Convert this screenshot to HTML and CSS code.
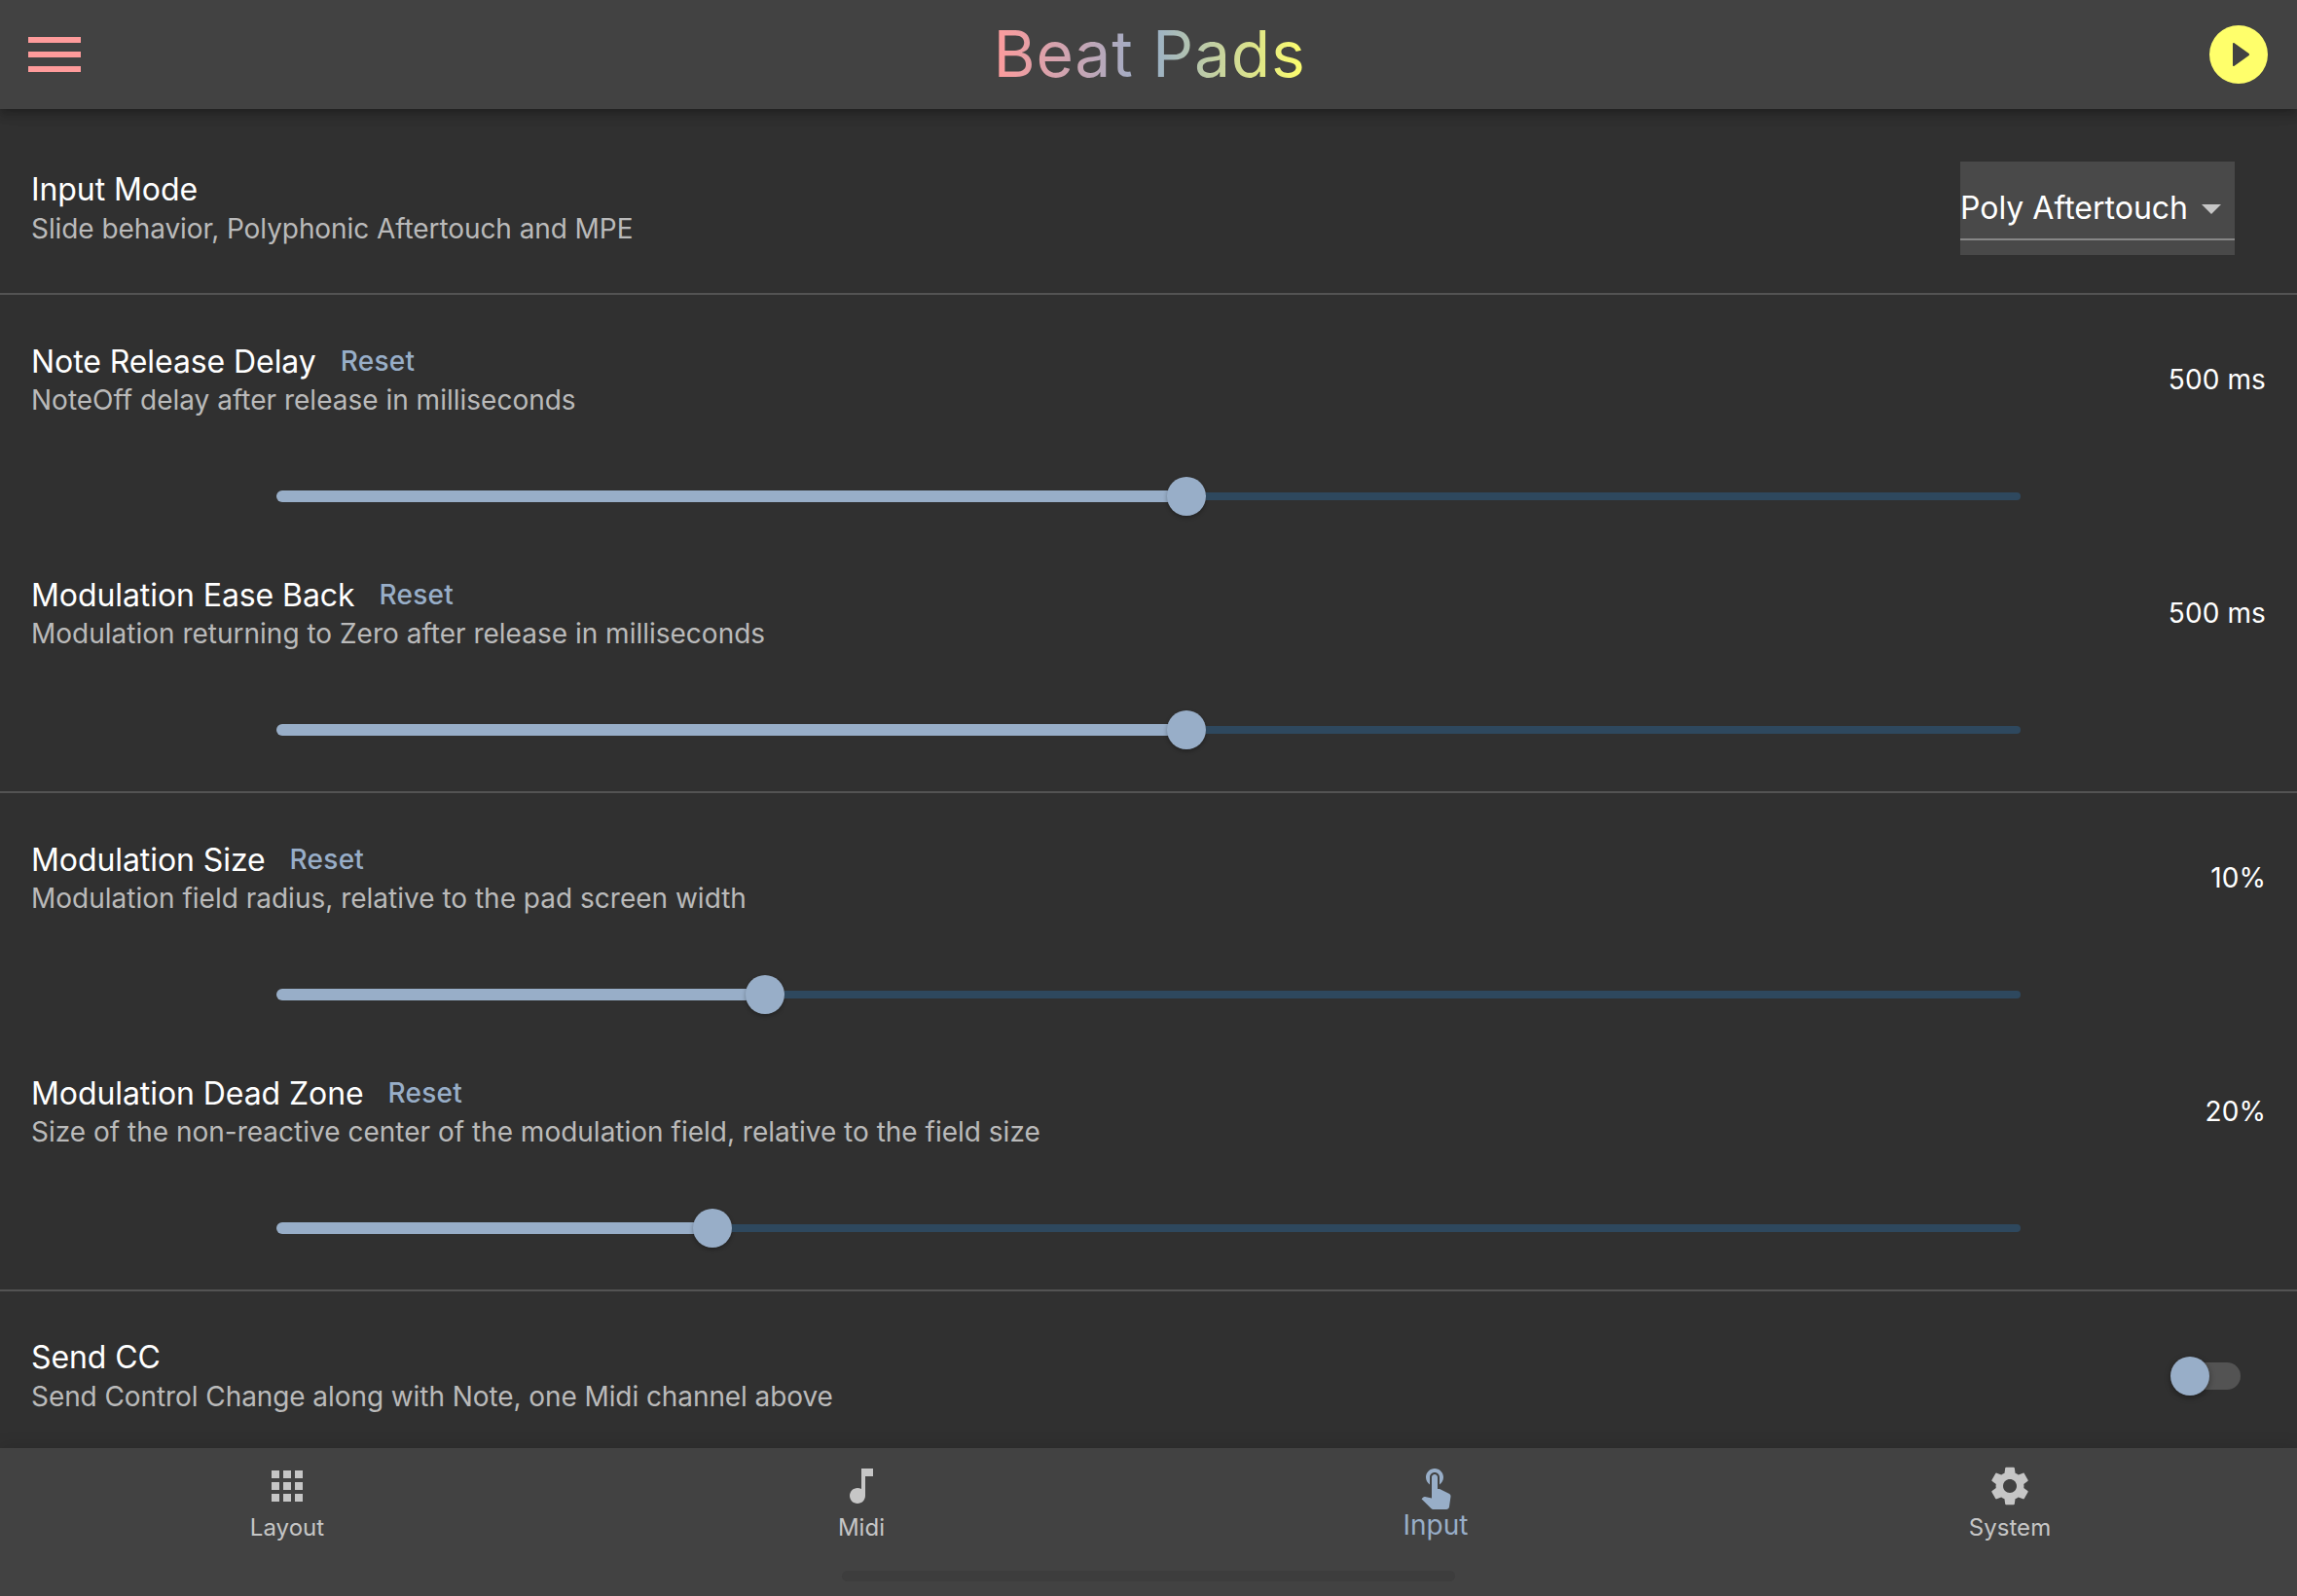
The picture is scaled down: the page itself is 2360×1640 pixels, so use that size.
FILE: index.html
```html
<!DOCTYPE html>
<html lang="en">
<head>
<meta charset="utf-8">
<title>Beat Pads</title>
<link rel="stylesheet" href="styles.css">
</head>
<body>
<header class="app-bar">
  <svg class="bar-icon menu" viewBox="0 0 24 24"><path d="M3 18h18v-2H3v2zm0-5h18v-2H3v2zm0-7v2h18V6H3z"/></svg>
  <h1 class="brand">Beat Pads</h1>
  <svg class="bar-icon play" viewBox="0 0 24 24"><path fill-rule="evenodd" d="M12 2a10 10 0 1 0 0 20 10 10 0 0 0 0-20zM10 8.350v7.300c0 .36.3.46.53.3l5-3.650c.2-.15.2-.45 0-.6l-5-3.650c-.23-.16-.53-.06-.53.3z"/></svg>
</header>
<main class="settings">
  <section class="group group-mode">
    <div class="setting">
      <div class="labels">
        <div class="title-row"><span class="title">Input Mode</span></div>
        <div class="subtitle">Slide behavior, Polyphonic Aftertouch and MPE</div>
      </div>
      <div class="dropdown">
        <div class="dropdown-field"><span class="dropdown-text">Poly Aftertouch</span><svg class="arrow" viewBox="0 0 20 10"><path d="M0 0h20L10 10z"/></svg></div>
      </div>
    </div>
  </section>
  <section class="group">
    <div class="slider-setting">
      <div class="setting">
        <div class="labels">
          <div class="title-row"><span class="title">Note Release Delay</span><button class="reset">Reset</button></div>
          <div class="subtitle">NoteOff delay after release in milliseconds</div>
        </div>
        <span class="value">500 ms</span>
      </div>
      <div class="slider"><div class="active" style="width:935px"></div><div class="thumb"></div><div class="rest"></div></div>
    </div>
    <div class="slider-setting">
      <div class="setting">
        <div class="labels">
          <div class="title-row"><span class="title">Modulation Ease Back</span><button class="reset">Reset</button></div>
          <div class="subtitle">Modulation returning to Zero after release in milliseconds</div>
        </div>
        <span class="value">500 ms</span>
      </div>
      <div class="slider"><div class="active" style="width:935px"></div><div class="thumb"></div><div class="rest"></div></div>
    </div>
  </section>
  <section class="group">
    <div class="slider-setting">
      <div class="setting">
        <div class="labels">
          <div class="title-row"><span class="title">Modulation Size</span><button class="reset">Reset</button></div>
          <div class="subtitle">Modulation field radius, relative to the pad screen width</div>
        </div>
        <span class="value">10%</span>
      </div>
      <div class="slider"><div class="active" style="width:502px"></div><div class="thumb"></div><div class="rest"></div></div>
    </div>
    <div class="slider-setting">
      <div class="setting">
        <div class="labels">
          <div class="title-row"><span class="title">Modulation Dead Zone</span><button class="reset">Reset</button></div>
          <div class="subtitle">Size of the non-reactive center of the modulation field, relative to the field size</div>
        </div>
        <span class="value">20%</span>
      </div>
      <div class="slider"><div class="active" style="width:448px"></div><div class="thumb"></div><div class="rest"></div></div>
    </div>
  </section>
  <section class="group group-cc">
    <div class="setting">
      <div class="labels">
        <div class="title-row"><span class="title">Send CC</span></div>
        <div class="subtitle">Send Control Change along with Note, one Midi channel above</div>
      </div>
      <div class="switch"><div class="switch-thumb"></div></div>
    </div>
  </section>
</main>
<nav class="tabs">
  <a class="tab"><svg class="tab-icon" viewBox="0 0 24 24"><path d="M4 8h4V4H4v4zm6 12h4v-4h-4v4zm-6 0h4v-4H4v4zm0-6h4v-4H4v4zm6 0h4v-4h-4v4zm6-10v4h4V4h-4zm-6 4h4V4h-4v4zm6 6h4v-4h-4v4zm0 6h4v-4h-4v4z"/></svg><span class="tab-label">Layout</span></a>
  <a class="tab"><svg class="tab-icon" viewBox="0 0 24 24"><path d="M12 3v10.550c-.59-.34-1.270-.55-2-.55-2.210 0-4 1.790-4 4s1.790 4 4 4 4-1.790 4-4V7h4V3h-6z"/></svg><span class="tab-label">Midi</span></a>
  <a class="tab selected"><svg class="tab-icon" viewBox="0 0 24 24"><path d="M9 11.240V7.500C9 6.120 10.120 5 11.500 5S14 6.120 14 7.500v3.740c1.210-.81 2-2.180 2-3.740C16 5.010 13.990 3 11.500 3S7 5.010 7 7.500c0 1.560.79 2.930 2 3.740zm9.840 4.630l-4.540-2.260c-.17-.07-.35-.11-.54-.11H13v-6c0-.83-.67-1.500-1.500-1.500S10 6.670 10 7.500v10.740l-3.430-.72c-.08-.01-.15-.03-.24-.03-.31 0-.59.13-.79.33l-.79.8 4.940 4.940c.27.27.65.44 1.060.44h6.790c.75 0 1.330-.55 1.440-1.280l.75-5.270c.01-.07.02-.14.02-.2 0-.62-.38-1.160-.91-1.380z"/></svg><span class="tab-label">Input</span></a>
  <a class="tab"><svg class="tab-icon" viewBox="0 0 24 24"><path d="M19.140 12.940c.04-.3.06-.61.06-.94 0-.32-.02-.64-.07-.94l2.030-1.580c.18-.14.23-.41.12-.61l-1.920-3.320c-.12-.22-.37-.29-.59-.22l-2.390.96c-.5-.38-1.030-.7-1.620-.94l-.36-2.540c-.04-.24-.24-.41-.48-.41h-3.840c-.24 0-.43.17-.47.41l-.36 2.540c-.59.24-1.130.57-1.620.94l-2.390-.96c-.22-.08-.47 0-.59.22L2.740 8.870c-.12.21-.08.47.12.61l2.030 1.580c-.05.3-.09.63-.09.94s.02.64.07.94l-2.030 1.580c-.18.14-.23.41-.12.61l1.920 3.320c.12.22.37.29.59.22l2.390-.96c.5.38 1.030.7 1.620.94l.36 2.540c.05.24.24.41.48.41h3.840c.24 0 .44-.17.47-.41l.36-2.540c.59-.24 1.130-.56 1.620-.94l2.390.96c.22.08.47 0 .59-.22l1.920-3.320c.12-.22.07-.47-.12-.61l-2.010-1.580zM12 15.500c-1.930 0-3.500-1.570-3.500-3.500s1.570-3.500 3.500-3.500 3.500 1.570 3.500 3.500-1.570 3.500-3.500 3.500z"/></svg><span class="tab-label">System</span></a>
  <div class="home-indicator"></div>
</nav>
</body>
</html>
```
FILE: styles.css
```css
* { box-sizing: border-box; }

body {
  margin: 0;
  width: 2360px;
  height: 1640px;
  overflow: hidden;
  display: flex;
  flex-direction: column;
  background: #303030;
  color: #fff;
  font-family: Inter, "Liberation Sans", sans-serif;
}

.app-bar {
  position: relative;
  flex: none;
  height: 112px;
  padding: 0 24px 0 20px;
  display: flex;
  align-items: center;
  justify-content: space-between;
  background: #424242;
  box-shadow: 0 4px 8px rgba(0, 0, 0, .2), 0 8px 10px rgba(0, 0, 0, .08), 0 2px 20px rgba(0, 0, 0, .06);
}

.bar-icon { width: 72px; height: 72px; }
.menu { fill: #ff9b9b; }
.play { fill: #ffff6b; }

.brand {
  margin: 0 0 2px 6px;
  font-size: 66px;
  font-weight: 400;
  line-height: 80px;
  letter-spacing: .8px;
  background: linear-gradient(90deg, #ff9b9b, #98aec8 50%, #ffff6b);
  -webkit-background-clip: text;
  background-clip: text;
  color: transparent;
}

.settings { flex: none; height: 1376px; overflow: hidden; }

.group { border-bottom: 2px solid #535353; height: 512px; padding-top: 49px; }
.group-mode { height: 191px; padding-top: 54px; }
.group-cc { height: 161px; border: 0; padding-top: 48px; }

.setting { display: flex; justify-content: space-between; padding: 0 32px; }
.slider-setting { height: 240px; }

.title-row { display: flex; height: 40px; align-items: center; gap: 25px; line-height: 40px; }
.title { font-size: 32px; letter-spacing: -.08px; white-space: nowrap; }
.subtitle { padding-top: 1px; font-size: 28px; line-height: 36px; color: #bababa; white-space: nowrap; }
.group-mode .labels { padding-top: 9px; }
.group-mode .subtitle, .group-cc .subtitle { padding-top: 2px; letter-spacing: -.08px; }

.reset {
  padding: 0 0 2px;
  border: 0;
  background: none;
  color: #98aec8;
  font: 500 28px/36px Inter, "Liberation Sans", sans-serif;
  letter-spacing: .25px;
}

.value { padding-top: 18px; font-size: 28px; line-height: 40px; letter-spacing: .1px; }

.dropdown { width: 282px; height: 96px; margin-right: 32px; background: #494949; }
.dropdown-field {
  height: 81px;
  display: flex;
  align-items: center;
  justify-content: space-between;
  padding: 16px 14px 0 0;
  border-bottom: 2px solid #868686;
}
.dropdown-text { font-size: 32px; line-height: 40px; white-space: nowrap; }
.arrow { width: 20px; height: 10px; margin-top: 2px; fill: #c6c6c6; }

.slider { display: flex; align-items: center; height: 40px; margin: 61px 284px 0; }
.setting + .slider { margin-top: 61px; }
.slider-setting .setting { height: 77px; }
.active { height: 12px; margin-right: -20px; border-radius: 6px 0 0 6px; background: #98aec8; }
.thumb {
  flex: none;
  width: 40px;
  height: 40px;
  border-radius: 50%;
  background: #98aec8;
  box-shadow: 0 2px 4px rgba(0, 0, 0, .3);
}
.rest { flex: 1; height: 8px; border-radius: 0 4px 4px 0; background: #2e485e; }

.switch {
  width: 66px;
  height: 28px;
  margin: 25px 26px 0 0;
  display: flex;
  align-items: center;
  border-radius: 14px;
  background: #535353;
}
.switch-thumb {
  flex: none;
  width: 40px;
  height: 40px;
  margin-left: -6px;
  border-radius: 50%;
  background: #98aec8;
  box-shadow: 0 2px 6px rgba(0, 0, 0, .4);
}

.tabs {
  position: relative;
  flex: none;
  height: 152px;
  display: grid;
  grid-template-columns: repeat(4, 1fr);
  background: #424242;
  color: #c6c6c6;
  box-shadow: 0 -2px 16px rgba(0, 0, 0, .12);
}
.tab { display: flex; flex-direction: column; align-items: center; padding-top: 15px; }
.tab-icon { width: 48px; height: 48px; fill: currentColor; }
.tab-label { font-size: 24px; line-height: 32px; margin-top: 3px; letter-spacing: .05px; }
.selected { color: #98aec8; }
.selected .tab-label { font-size: 28px; margin-top: 0; }

.home-indicator {
  position: absolute;
  left: 865px;
  top: 126px;
  width: 630px;
  height: 11px;
  border-radius: 6px;
  background: #3d3d3d;
}
```
